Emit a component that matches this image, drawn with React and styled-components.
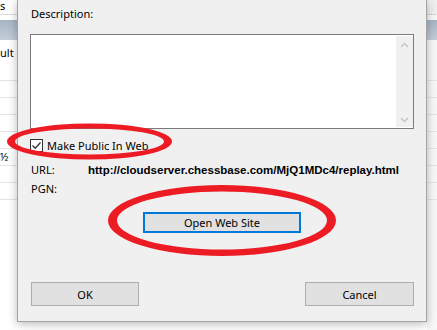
import React from 'react'
import styled, { createGlobalStyle } from 'styled-components'

const Global = createGlobalStyle`
  html, body { margin:0; padding:0; background:#fff; }
  body { width:437px; height:330px; overflow:hidden; }
`

const Desktop = styled.div`
  position:relative;
  width:437px;
  height:330px;
  display:flex;
  align-items:flex-start;
  background:#fff;
  overflow:hidden;
`
const Strip = styled.div`
  width:${p => p.$w}px;
  flex:none;
  height:100%;
  display:flex;
  flex-direction:column;
  font-family:"Noto Sans", sans-serif;
  font-size:11px;
  color:#000;
  background:${p => p.$bg};
  overflow:hidden;
`
const StripTab = styled.div`
  height:14px;
  line-height:12px;
  border-bottom:1px ${p => (p.$dotted ? 'dotted #bdbdbd' : 'solid #dadada')};
  background:${p => (p.$dotted ? '#efefef' : '#fff')};
  margin-bottom:5px;
  white-space:nowrap;
`
const GridHeader = styled.div`
  height:20px;
  background:linear-gradient(#a6b4c4, #c3cdd8);
`
const FirstRow = styled.div`
  height:40px;
  line-height:26px;
  border-bottom:1px solid #e4e4e4;
  white-space:nowrap;
`
const Row = styled.div`
  height:16px;
  line-height:16px;
  border-bottom:1px solid #e4e4e4;
  white-space:nowrap;
`

const Dialog = styled.div`
  position:relative;
  z-index:1;
  flex:none;
  width:410px;
  height:322px;
  box-sizing:border-box;
  background:#f0f0f0;
  border:1px solid #a3a3a3;
  border-top:none;
  box-shadow:0 2px 9px rgba(0,0,0,0.28);
  padding:0 12px;
  display:flex;
  flex-direction:column;
  font-family:"Noto Sans", sans-serif;
  font-size:11px;
  color:#000;
`
const Label = styled.div`
  margin-top:6px;
  margin-left:1px;
  line-height:16px;
`
const Memo = styled.div`
  margin-top:12px;
  height:95px;
  box-sizing:border-box;
  border:1px solid #7a7a7a;
  background:#fff;
  padding:1px 0 1px 0;
  display:flex;
  justify-content:flex-end;
`
const ScrollBar = styled.div`
  width:17px;
  background:#f0f0f0;
  display:flex;
  flex-direction:column;
  justify-content:space-between;
  align-items:center;
  padding:6px 0 4px;
`
const CheckRow = styled.label`
  margin-top:10px;
  display:flex;
  align-items:center;
  gap:4px;
  height:13px;
  line-height:13px;
`
const Box = styled.span`
  width:13px;
  height:13px;
  box-sizing:border-box;
  border:1px solid #333;
  background:#fff;
  display:flex;
  align-items:center;
  justify-content:center;
`
const Field = styled.div`
  margin-top:${p => p.$top}px;
  display:grid;
  grid-template-columns:57px 1fr;
  line-height:16px;
  padding-left:1px;
`
const Value = styled.span`
  font-family:"Liberation Sans", Arial, sans-serif;
  font-weight:bold;
  font-size:11.5px;
  color:#000;
`
const Button = styled.button`
  width:${p => p.$w}px;
  height:${p => p.$h}px;
  box-sizing:border-box;
  background:#e1e1e1;
  border:${p => (p.$focus ? '2px solid #0078d7' : '1px solid #adadad')};
  font-family:"Noto Sans", sans-serif;
  font-size:11px;
  color:#000;
  padding:0;
  cursor:pointer;
`
const Center = styled.div`
  margin-top:15px;
  display:flex;
  justify-content:center;
`
const Footer = styled.div`
  margin-top:auto;
  padding:0 0 15px 1px;
  display:flex;
  justify-content:space-between;
`
const Marks = styled.svg`
  position:absolute;
  left:0;
  top:0;
  z-index:2;
  pointer-events:none;
`

const ring = (cx, cy, rx, ry, irx, iry) =>
  `M${cx - rx},${cy} a${rx},${ry} 0 1,0 ${rx * 2},0 a${rx},${ry} 0 1,0 ${-rx * 2},0 Z ` +
  `M${cx - irx},${cy} a${irx},${iry} 0 1,0 ${irx * 2},0 a${irx},${iry} 0 1,0 ${-irx * 2},0 Z`

const Chevron = ({ up }) => (
  <svg width="9" height="6" viewBox="0 0 9 6">
    <path d={up ? 'M1 5 L4.5 1.5 L8 5' : 'M1 1 L4.5 4.5 L8 1'} fill="none" stroke="#c4c4c4" strokeWidth="1.4" />
  </svg>
)

const rows = [0, 1, 2, 3, 4, 5, 6]

const Background = ({ w, bg, dotted, first, tab, half }) => (
  <Strip $w={w} $bg={bg}>
    <StripTab $dotted={dotted}>{tab}</StripTab>
    <GridHeader />
    <FirstRow>{first}</FirstRow>
    {rows.map(i => (
      <Row key={i}>{half && i === 4 ? '½' : ''}</Row>
    ))}
  </Strip>
)

export default function App() {
  return (
    <>
      <Global />
      <Desktop>
        <Background w={17} bg="#fff" tab="s" first="ult" half />
        <Dialog>
          <Label>Description:</Label>
          <Memo>
            <ScrollBar>
              <Chevron up />
              <Chevron />
            </ScrollBar>
          </Memo>
          <CheckRow>
            <Box>
              <svg width="11" height="11" viewBox="0 0 11 11">
                <path d="M1.5 5.5 L4.2 8.2 L9.5 2.5" fill="none" stroke="#333" strokeWidth="1.3" />
              </svg>
            </Box>
            Make Public In Web
          </CheckRow>
          <Field $top={10}>
            <span>URL:</span>
            <Value>http://cloudserver.chessbase.com/MjQ1MDc4/replay.html</Value>
          </Field>
          <Field $top={3}>
            <span>PGN:</span>
            <span />
          </Field>
          <Center>
            <Button $w={158} $h={21} $focus>Open Web Site</Button>
          </Center>
          <Footer>
            <Button $w={108} $h={24}>OK</Button>
            <Button $w={109} $h={24}>Cancel</Button>
          </Footer>
        </Dialog>
        <Background w={11} bg="#f7f7f7" dotted />
        <Marks width="437" height="330">
          <path d={ring(89.5, 141.5, 82.5, 18, 74.5, 13)} fill="#ed1c24" fillRule="evenodd" />
          <path d={ring(222, 220.5, 114, 35.5, 105, 29)} fill="#ed1c24" fillRule="evenodd" />
        </Marks>
      </Desktop>
    </>
  )
}
